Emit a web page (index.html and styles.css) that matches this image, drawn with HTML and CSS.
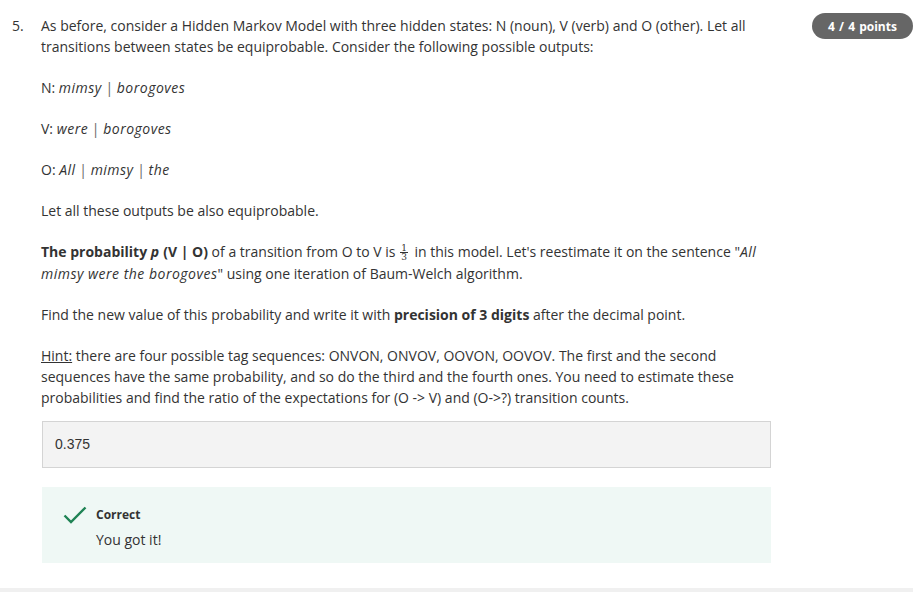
FILE: index.html
```html
<!DOCTYPE html>
<html>
<head>
<meta charset="utf-8">
<link rel="stylesheet" href="styles.css">
</head>
<body>
<div class="question">
  <div class="qnum">5.</div>
  <div class="qbody">
    <p>As before, consider a Hidden Markov Model with three hidden states: N (noun), V (verb) and O (other). Let all transitions between states be equiprobable. Consider the following possible outputs:</p>
    <p>N: <i>mimsy</i> <span class="pipe">|</span> <i>borogoves</i></p>
    <p>V: <i>were</i> <span class="pipe">|</span> <i>borogoves</i></p>
    <p>O: <i>All</i> <span class="pipe">|</span> <i>mimsy</i> <span class="pipe">|</span> <i>the</i></p>
    <p>Let all these outputs be also equiprobable.</p>
    <p><b>The probability <i>p</i> (V | O)</b> of a transition from O to V is <span class="frac"><span class="num">1</span><span class="den">3</span></span> in this model. Let's reestimate it on the sentence "<i>All mimsy were the borogoves</i>" using one iteration of Baum-Welch algorithm.</p>
    <p>Find the new value of this probability and write it with <b>precision of 3 digits</b> after the decimal point.</p>
    <p><u>Hint:</u> there are four possible tag sequences: ONVON, ONVOV, OOVON, OOVOV. The first and the second sequences have the same probability, and so do the third and the fourth ones. You need to estimate these probabilities and find the ratio of the expectations for (O -&gt; V) and (O-&gt;?) transition counts.</p>
    <div class="answer">0.375</div>
    <div class="feedback">
      <svg class="check" width="24" height="18" viewBox="0 0 24 18"><path d="M1.5 9.5 L8 16 L22.5 1.5" fill="none" stroke="#1f8354" stroke-width="2.4"/></svg>
      <div class="fbtext">
        <div class="fbtitle">Correct</div>
        <div class="fbmsg">You got it!</div>
      </div>
    </div>
  </div>
  <div class="badge">4 / 4 points</div>
</div>
<div class="bottombar"></div>
</body>
</html>
```
FILE: styles.css
```css
html, body {
  margin: 0;
  padding: 0;
  background: #fff;
}
body {
  font-family: "Open Sans", sans-serif;
  font-size: 14px;
  line-height: 21px;
  color: #333;
  width: 913px;
  height: 592px;
  overflow: hidden;
  display: flex;
  flex-direction: column;
}
.question {
  display: flex;
  align-items: flex-start;
  padding-top: 15px;
  flex: 1;
}
.qnum {
  width: 29px;
  padding-left: 12px;
  flex: none;
}
.qbody {
  width: 730px;
  flex: none;
}
.qbody p {
  margin: 0 0 20px 0;
}
.qbody i {
  letter-spacing: 0.5px;
}
.pipe {
  color: #666;
}
.frac {
  display: inline-block;
  vertical-align: middle;
  text-align: center;
  font-family: "DejaVu Serif", "Liberation Serif", serif;
  font-size: 9px;
  margin: 0 3px 2px 1px;
  line-height: 8px;
}
.frac .num {
  display: block;
  border-bottom: 1px solid #333;
  padding: 0 1px;
  line-height: 8px;
}
.frac .den {
  display: block;
  line-height: 8px;
}
.answer {
  margin-top: -7px;
  margin-left: 1px;
  height: 45px;
  box-sizing: content-box;
  border: 1px solid #d4d4d4;
  background: #f3f3f3;
  font-family: "Liberation Sans", Arial, sans-serif;
  font-size: 14px;
  line-height: 45px;
  padding-left: 12px;
  color: #333;
}
.feedback {
  margin-top: 19px;
  margin-left: 1px;
  height: 76px;
  background: #eff8f5;
  display: flex;
  align-items: flex-start;
  padding-left: 21px;
  box-sizing: border-box;
}
.check {
  margin-top: 19px;
  flex: none;
}
.fbtext {
  margin-left: 9px;
  padding-top: 18px;
}
.fbtitle {
  font-weight: 700;
  font-size: 12px;
  line-height: 20px;
}
.fbmsg {
  margin-top: 5px;
  line-height: 20px;
}
.badge {
  margin-left: auto;
  margin-top: -2px;
  width: 101px;
  height: 26px;
  border-radius: 13px;
  background: #666;
  color: #fff;
  font-size: 12px;
  font-weight: 700;
  line-height: 27px;
  text-align: center;
  word-spacing: 1px;
}
.bottombar {
  height: 4px;
  background: #f0f0f0;
  flex: none;
}
```
